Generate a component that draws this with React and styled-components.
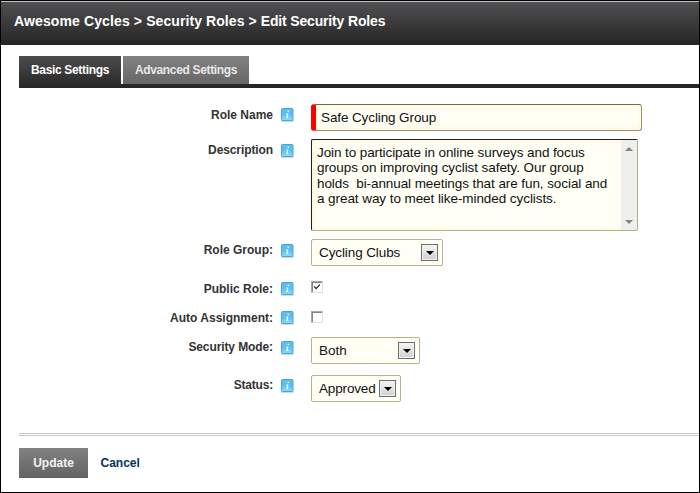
import React from "react";
import styled, { createGlobalStyle } from "styled-components";

const GlobalStyle = createGlobalStyle`
  * { box-sizing: border-box; }
  body { margin: 0; background: #fff; font-family: "Liberation Sans", Arial, sans-serif; }
`;

const Page = styled.div`
  width: 700px;
  height: 493px;
  border: 1px solid #000;
  background: #fff;
  overflow: hidden;
`;

const Header = styled.h1`
  margin: 0;
  height: 44px;
  padding: 0 0 5px 13px;
  display: flex;
  align-items: center;
  border-top: 1px solid #c4c1c4;
  background: linear-gradient(#504f51, #252525);
  color: #fff;
  font-size: 14px;
  font-weight: bold;
  white-space: pre;
`;

const Crumb = styled.span`
  letter-spacing: ${(p) => p.$spacing}px;
`;

const Tabs = styled.nav`
  display: flex;
  gap: 2px;
  height: 32px;
  margin: 11px 0 0 18px;
  background: linear-gradient(#262626, #262626) bottom / 100% 4px no-repeat;
`;

const Tab = styled.a`
  width: ${(p) => p.$width}px;
  height: ${(p) => (p.$active ? 32 : 28)}px;
  line-height: 28px;
  text-align: center;
  white-space: nowrap;
  font-size: 12px;
  font-weight: bold;
  letter-spacing: -0.34px;
  color: ${(p) => (p.$active ? "#fff" : "#e8e8e8")};
  background: ${(p) =>
    p.$active ? "linear-gradient(#4d4d4d, #262626)" : "linear-gradient(#828282, #666)"};
`;

const Form = styled.form`
  height: 329px;
  margin: 16px 0 0 18px;
`;

const Row = styled.div`
  display: grid;
  grid-template-columns: 254px 20px auto;
  column-gap: 8px;
  justify-content: start;
  align-items: start;
  height: ${(p) => p.$height}px;
`;

const Label = styled.label`
  margin-top: ${(p) => p.$offset}px;
  line-height: 14px;
  text-align: right;
  white-space: nowrap;
  font-size: 12px;
  font-weight: bold;
  letter-spacing: ${(p) => p.$spacing}px;
  color: #333;
`;

const Info = styled.svg`
  display: block;
  width: 13px;
  height: 15px;
  margin-top: ${(p) => p.$offset}px;
`;

const TextBox = styled.div`
  width: 331px;
  height: 27px;
  margin-left: 2px;
  padding-left: 5px;
  border: 1px solid #9a916b;
  border-top-color: #736c50;
  border-left: 5px solid #f00;
  border-radius: 3px;
  background: #fffff5;
  box-shadow: inset 0 0 6px #fff3cf;
  color: #111;
  font-size: 13.5px;
  line-height: 26px;
  letter-spacing: -0.11px;
`;

const Area = styled.div`
  display: flex;
  justify-content: space-between;
  width: 327px;
  height: 92px;
  margin-left: 2px;
  border: 1px solid #222;
  border-right-color: #b5ae82;
  border-bottom-color: #b5ae82;
  border-radius: 2px;
  background: #fffff5;
  box-shadow: inset 0 0 6px #fff3cf;
`;

const AreaText = styled.div`
  padding: 5px 0 0 5px;
  white-space: pre;
  color: #111;
  font-size: 13.5px;
  line-height: 15.4px;
`;

const Line = styled.div`
  letter-spacing: ${(p) => p.$spacing}px;
`;

const Scrollbar = styled.div`
  display: flex;
  flex-direction: column;
  justify-content: space-between;
  align-items: center;
  width: 16px;
  padding: 7px 0 6px;
  background: #efefef;
`;

const Arrow = styled.i`
  width: 0;
  height: 0;
  border: solid transparent;
  border-width: ${(p) => (p.$up ? "0 4px 4px" : "4px 4px 0")};
  border-${(p) => (p.$up ? "bottom" : "top")}-color: ${(p) => p.$color};
`;

const Select = styled.div`
  display: flex;
  justify-content: space-between;
  align-items: center;
  width: ${(p) => p.$width}px;
  height: 27px;
  margin-left: 2px;
  padding: 0 4px 0 7px;
  border: 1px solid #b9b189;
  border-radius: 2px;
  background: #fffff5;
  color: #111;
  font-size: 13.5px;
  white-space: nowrap;
  letter-spacing: ${(p) => p.$spacing}px;
`;

const SelectButton = styled.span`
  display: flex;
  justify-content: center;
  align-items: center;
  flex: none;
  width: 17px;
  height: 17px;
  border: 1px solid #6d6d6d;
  background: linear-gradient(#f4f4f4, #d0d0d0);
  box-shadow: inset 0 0 0 1px #f3f3f3;
`;

const Checkbox = styled.span`
  display: block;
  width: 12px;
  height: 12px;
  margin: ${(p) => p.$offset}px 0 0 2px;
  border: 1px solid #e3e0d8;
  border-top-color: #aaa8a4;
  border-left-color: #aaa8a4;
  box-shadow: inset 1px 1px 0 #85838c;
  background: #fff;
`;

const Check = styled.svg`
  display: block;
  width: 10px;
  height: 10px;
`;

const Divider = styled.div`
  height: 3px;
  margin-left: 18px;
  border: solid #c8c8c8;
  border-width: 1px 0;
`;

const Actions = styled.div`
  display: flex;
  align-items: center;
  gap: 12px;
  margin: 12px 0 0 18px;
`;

const Update = styled.button`
  width: 69px;
  height: 30px;
  padding: 0;
  border: 0;
  background: linear-gradient(#828282, #636363);
  color: #f3f3f3;
  font: bold 12px "Liberation Sans", Arial, sans-serif;
`;

const Cancel = styled.a`
  padding-left: 0.5px;
  color: #003366;
  font-size: 12px;
  font-weight: bold;
`;

function InfoIcon({ offset }) {
  return (
    <Info viewBox="0 0 13 15" $offset={offset}>
      <defs>
        <linearGradient id="infoFill" x1="0" y1="0" x2="0" y2="1">
          <stop offset="0" stopColor="#62bce9" />
          <stop offset=".5" stopColor="#5cc0ee" />
          <stop offset="1" stopColor="#8bdcfb" />
        </linearGradient>
      </defs>
      <rect x="0" y="12" width="13" height="2" rx="1" fill="#d3dbe0" />
      <rect x=".5" y=".5" width="11.5" height="12" rx=".8" fill="url(#infoFill)" stroke="#48a6d6" />
      <path d="M6.6 3.4H8M5.2 6H6.8L6 9.4H7.3" fill="none" stroke="#fff" strokeWidth="1.1" />
    </Info>
  );
}

function Field({ label, height, offset, rise = 0, spacing = 0, children }) {
  return (
    <Row $height={height}>
      <Label $offset={offset - rise} $spacing={spacing}>{label}</Label>
      <InfoIcon offset={offset} />
      {children}
    </Row>
  );
}

function Dropdown({ value, width, spacing }) {
  return (
    <Select $width={width} $spacing={spacing}>
      {value}
      <SelectButton><Arrow $color="#000" /></SelectButton>
    </Select>
  );
}

export default function App() {
  return (
    <Page>
      <GlobalStyle />
      <Header>
        <Crumb $spacing={0.12}>{"Awesome Cycles > "}</Crumb>
        <Crumb $spacing={0.08}>{"Security Roles > "}</Crumb>
        <Crumb $spacing={-0.16}>Edit Security Roles</Crumb>
      </Header>
      <Tabs>
        <Tab $active $width={102}>Basic Settings</Tab>
        <Tab $width={126}>Advanced Settings</Tab>
      </Tabs>
      <Form>
        <Field label="Role Name" height={35} offset={4}>
          <TextBox>Safe Cycling Group</TextBox>
        </Field>
        <Field label="Description" height={100} offset={5} rise={1} spacing={-0.1}>
          <Area>
            <AreaText>
              <Line $spacing={-0.1}>Join to participate in online surveys and focus</Line>
              <Line $spacing={-0.07}>groups on improving cyclist safety. Our group</Line>
              <Line $spacing={-0.08}>holds  bi-annual meetings that are fun, social and</Line>
              <Line $spacing={-0.07}>a great way to meet like-minded cyclists.</Line>
            </AreaText>
            <Scrollbar>
              <Arrow $up $color="#858585" />
              <Arrow $color="#858585" />
            </Scrollbar>
          </Area>
        </Field>
        <Field label="Role Group:" height={38} offset={5} rise={1}>
          <Dropdown value="Cycling Clubs" width={132} spacing={-0.1} />
        </Field>
        <Field label="Public Role:" height={29} offset={5}>
          <Checkbox $offset={4}>
            <Check viewBox="0 0 10 10">
              <path d="M2.2 4.4L4.1 6.6L7.8 2.6" fill="none" stroke="#222" strokeWidth="1.3" />
            </Check>
          </Checkbox>
        </Field>
        <Field label="Auto Assignment:" height={31} offset={5}>
          <Checkbox $offset={5} />
        </Field>
        <Field label="Security Mode:" height={38} offset={4} rise={1} spacing={-0.1}>
          <Dropdown value="Both" width={109} spacing={0} />
        </Field>
        <Field label="Status:" height={27} offset={4} rise={1} spacing={-0.2}>
          <Dropdown value="Approved" width={90} spacing={-0.15} />
        </Field>
      </Form>
      <Divider />
      <Actions>
        <Update type="button">Update</Update>
        <Cancel>Cancel</Cancel>
      </Actions>
    </Page>
  );
}
